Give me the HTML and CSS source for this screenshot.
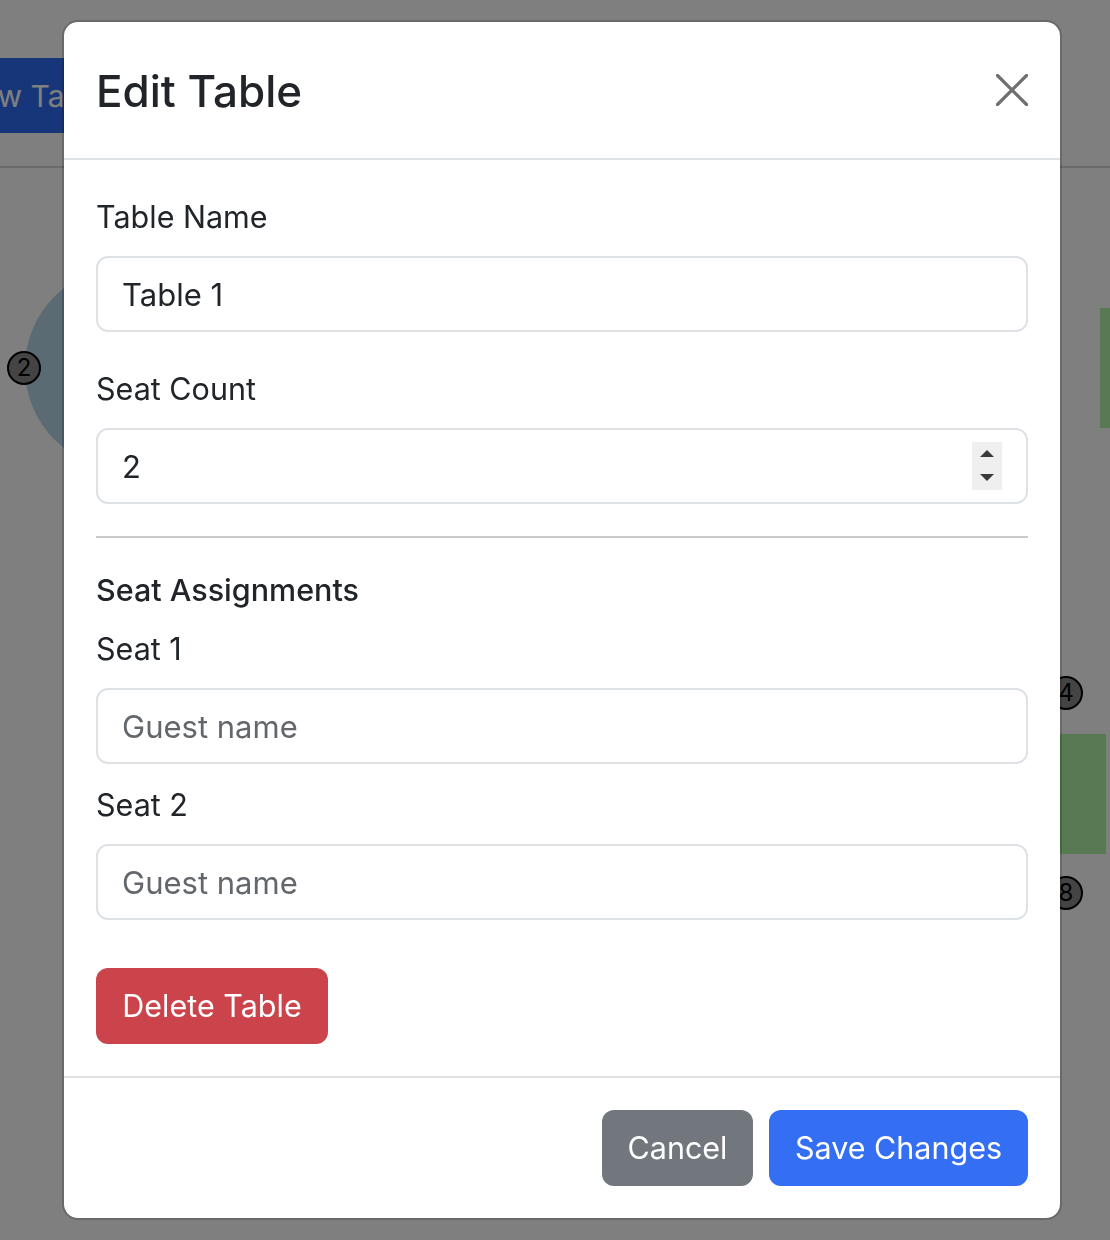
FILE: index.html
```html
<!DOCTYPE html>
<html lang="en">
<head>
<meta charset="utf-8">
<title>Edit Table</title>
<link rel="stylesheet" href="styles.css">
</head>
<body>
<div class="app">
  <div class="toolbar">
    <button class="tb-btn">New Table</button>
  </div>
  <div class="canvas">
    <div class="round-table"></div>
    <div class="seat seat-2">2</div>
    <div class="rect-table rect-a"></div>
    <div class="rect-table rect-b"></div>
    <div class="seat seat-4">4</div>
    <div class="seat seat-8">8</div>
  </div>
</div>

<div class="backdrop"></div>

<div class="modal">
  <div class="dialog">
    <div class="modal-header">
      <h5 class="modal-title">Edit Table</h5>
      <button class="btn-close" aria-label="Close">
        <svg width="32" height="32" viewBox="0 0 32 32"><path d="M1.5 1.5 L30.5 30.5 M30.5 1.5 L1.5 30.5" stroke="#6f6f6f" stroke-width="3.2" stroke-linecap="round" fill="none"/></svg>
      </button>
    </div>
    <div class="modal-body">
      <div class="group">
        <label class="form-label">Table Name</label>
        <input class="form-control" type="text" value="Table 1">
      </div>
      <div class="group">
        <label class="form-label">Seat Count</label>
        <div class="num-wrap">
          <input class="form-control" type="text" value="2">
          <span class="spinner">
            <svg width="30" height="48" viewBox="0 0 30 48"><path d="M8 15 L15 8 L22 15 Z" fill="#3a3a3a"/><path d="M8 32 L22 32 L15 39 Z" fill="#3a3a3a"/></svg>
          </span>
        </div>
      </div>
      <hr class="divider">
      <h6 class="section-title">Seat Assignments</h6>
      <div class="seat-field">
        <label class="form-label">Seat 1</label>
        <input class="form-control" type="text" placeholder="Guest name">
      </div>
      <div class="seat-field">
        <label class="form-label">Seat 2</label>
        <input class="form-control" type="text" placeholder="Guest name">
      </div>
      <button class="btn btn-danger">Delete Table</button>
    </div>
    <div class="modal-footer">
      <button class="btn btn-secondary">Cancel</button>
      <button class="btn btn-primary">Save Changes</button>
    </div>
  </div>
</div>
</body>
</html>
```
FILE: styles.css
```css
* { box-sizing: border-box; }
html, body {
  margin: 0;
  padding: 0;
  width: 1110px;
  height: 1240px;
  overflow: hidden;
  background: #ffffff;
  font-family: Inter, "Noto Sans", "Liberation Sans", sans-serif;
  color: #212529;
}

/* background app */
.app { position: relative; width: 1110px; height: 1240px; }
.toolbar {
  height: 168px;
  border-bottom: 2px solid #d6d6d6;
  padding-top: 58px;
}
.tb-btn {
  margin-left: -66px;
  height: 75px;
  padding: 0 24px;
  border: none;
  border-radius: 12px;
  background: #2e6cf4;
  color: #ffffff;
  font-family: inherit;
  font-size: 30px;
  white-space: nowrap;
}
.canvas { position: relative; }
.round-table {
  position: absolute;
  left: 25px; top: 98px;
  width: 204px; height: 204px;
  border-radius: 50%;
  background: #b6d6e8;
}
.seat {
  position: absolute;
  width: 34px; height: 34px;
  border-radius: 50%;
  background: #888888;
  border: 2px solid #000;
  color: #000;
  font-size: 24px;
  line-height: 30px;
  text-align: center;
}
.seat-2 { left: 7px; top: 183px; }
.seat-4 { left: 1049px; top: 508px; }
.seat-8 { left: 1049px; top: 708px; }
.rect-table { position: absolute; background: #aef4a4; }
.rect-a { left: 1100px; top: 140px; width: 60px; height: 120px; }
.rect-b { left: 1000px; top: 566px; width: 106px; height: 120px; }

.backdrop {
  position: fixed;
  inset: 0;
  background: rgba(0, 0, 0, 0.5);
}

/* modal */
.modal {
  position: fixed;
  inset: 0;
  padding: 20px 0 0 62px;
}
.dialog {
  width: 1000px;
  height: 1200px;
  background: #ffffff;
  border: 2px solid rgba(0, 0, 0, 0.175);
  border-radius: 16px;
  background-clip: padding-box;
  display: flex;
  flex-direction: column;
}
.modal-header {
  flex-shrink: 0;
  height: 138px;
  padding: 0 32px;
  border-bottom: 2px solid #dee2e6;
  display: flex;
  align-items: center;
  justify-content: space-between;
}
.modal-title {
  margin: 0;
  font-size: 44px;
  font-weight: 500;
  line-height: 56px;
  padding-top: 2px;
}
.btn-close {
  width: 32px; height: 32px;
  padding: 0;
  border: none;
  background: transparent;
  display: flex;
}
.modal-body {
  flex-shrink: 0;
  padding: 32px;
  display: flex;
  flex-direction: column;
  align-items: flex-start;
}
.group { width: 100%; margin-bottom: 32px; }
.seat-field { width: 100%; margin-bottom: 16px; }
.form-label {
  display: block;
  font-size: 30.5px;
  line-height: 48px;
  margin-bottom: 16px;
  padding-top: 1px;
}
.form-control {
  display: block;
  width: 100%;
  height: 76px;
  padding: 12px 24px;
  font-family: inherit;
  font-size: 31px;
  line-height: 48px;
  color: #212529;
  background: #ffffff;
  border: 2px solid #dee2e6;
  border-radius: 12px;
  outline: none;
}
.form-label + .form-control, .form-label + .num-wrap { margin-top: -1px; }
.form-control::placeholder { color: #63676b; opacity: 1; }
.num-wrap { position: relative; }
.spinner {
  position: absolute;
  left: 876px;
  top: 14px;
  width: 30px;
  height: 48px;
  background: #efefef;
  display: block;
}
.spinner svg { display: block; }
.divider {
  width: 100%;
  margin: 0 0 32px;
  border: 0;
  border-top: 2px solid #c8c9ca;
}
.section-title {
  margin: 0 0 16px;
  font-size: 30.5px;
  font-weight: 500;
  line-height: 37px;
  padding-top: 1px;
}
.btn {
  height: 76px;
  padding: 0 24px;
  border: none;
  border-radius: 12px;
  font-family: inherit;
  font-size: 30.5px;
  line-height: 48px;
  color: #ffffff;
}
.btn-danger { background: #cb444b; margin-top: 32px; width: 232px; }
.btn-secondary { background: #72777e; width: 151px; }
.btn-primary { background: #346ff3; width: 259px; }
.modal-footer {
  flex-shrink: 0;
  margin-top: auto;
  border-top: 2px solid #dee2e6;
  padding: 32px;
  display: flex;
  justify-content: flex-end;
  gap: 16px;
}
```
